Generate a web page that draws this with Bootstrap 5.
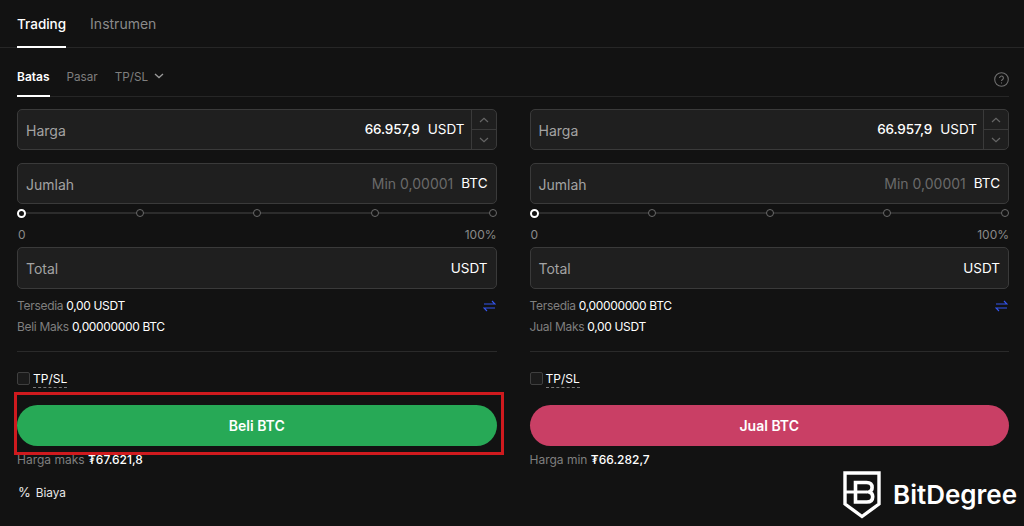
<!DOCTYPE html>
<html lang="id">
<head>
    <meta charset="UTF-8">
    <title>Trading</title>
    <link href="https://cdn.jsdelivr.net/npm/bootstrap@5.3.0/dist/css/bootstrap.min.css" rel="stylesheet">
    <style>
        html, body { height: 100%; }
        body {
            background: #121212;
            color: #fff;
            font-family: Inter, "Liberation Sans", sans-serif;
            overflow: hidden;
            position: relative;
        }
        .top-tabs {
            height: 48px;
            padding: 0 17px;
            gap: 24px;
            border-bottom: 1px solid #262626;
            font-size: 14px;
        }
        .top-tab {
            color: #8a8a8a;
            height: 48px;
            line-height: 47px;
        }
        .top-tab.on {
            color: #fff;
            font-weight: 500;
            font-size: 13.5px;
            line-height: 48px;
            border-bottom: 2px solid #fff;
        }
        .sub-tabs {
            margin: 0 15px 0 17px;
            height: 49px;
            gap: 17px;
            border-bottom: 1px solid #262626;
            font-size: 11.7px;
        }
        .sub-tab {
            color: #7f7f7f;
            height: 49px;
            line-height: 58px;
        }
        .sub-tab.on {
            color: #fff;
            font-weight: 600;
            font-size: 12px;
            line-height: 57px;
            border-bottom: 2px solid #fff;
        }
        .help-ico { margin: 24px 0 0 auto; }
        .forms {
            padding: 12px 15px 0 17px;
            gap: 33px;
        }
        .side { width: 480px; }
        .field {
            height: 41px;
            background: #1f1f1f;
            border: 1px solid #3a3a3a;
            border-radius: 5px;
            font-size: 14px;
            padding-left: 8px;
            margin-bottom: 13px;
        }
        .field-label { color: #a3a3a3; margin-top: 1px; }
        .field-val { color: #fff; font-weight: 500; font-size: 13.5px; letter-spacing: -0.1px; }
        .field-hint { color: #6a6a6a; font-size: 14px; margin-right: 8px; }
        .field-unit { color: #fff; font-size: 13.5px; margin-left: 8px; margin-right: 8px; }
        .stepper {
            width: 25px;
            height: 100%;
            border-left: 1px solid #3a3a3a;
            margin-left: -2px;
        }
        .stepper div { flex: 1; }
        .stepper div + div { border-top: 1px solid #3a3a3a; }
        .slider-row {
            height: 8px;
            margin-top: 5px;
            position: relative;
        }
        .slider-row::before {
            content: "";
            position: absolute;
            left: 4px; right: 4px; top: 3px;
            height: 2px;
            background: #2c2c2c;
        }
        .dot {
            width: 8px;
            height: 8px;
            border: 1px solid #6a6a6a;
            border-radius: 50%;
            background: #121212;
            position: relative;
        }
        .dot.on {
            width: 9px;
            height: 9px;
            border: 2px solid #fff;
            background: #121212;
        }
        .range-labels {
            font-size: 12px;
            color: #8a8a8a;
            margin: 9px 0 3px 1px;
            line-height: 18px;
        }
        .info-line {
            font-size: 12px;
            line-height: 21px;
            height: 21px;
            color: #7f7f7f;
            letter-spacing: -0.3px;
        }
        .info-line b { color: #fff; font-weight: 400; letter-spacing: -0.35px; }
        .info-wrap { margin-top: -7px; }
        .rule {
            border-top: 1px solid #2a2a2a;
            margin-top: 14px;
            margin-bottom: 18px;
        }
        .tick {
            width: 13px;
            height: 13px;
            border: 1px solid #3f3f3f;
            border-radius: 2px;
            background: #1b1b1b;
            margin: 2px 3px 0 0;
        }
        .tpsl {
            font-size: 12px;
            color: #fff;
            line-height: 15px;
            border-bottom: 1px dashed #777;
            padding-bottom: 1px;
            margin-top: 1px;
        }
        .tick-row { height: 20px; margin-bottom: 15px; }
        .trade-btn {
            width: 100%;
            height: 41px;
            border-radius: 21px;
            color: #fff;
            font-size: 14px;
            font-weight: 600;
            border: 0;
            padding: 0;
        }
        .trade-btn.buy { background: #27a956; }
        .trade-btn.sell { background: #c93f65; }
        .btn-wrap { position: relative; }
        .red-box {
            position: absolute;
            left: -3px; right: -7px; top: -13px; bottom: -9px;
            border: 3px solid #cf1a1e;
            pointer-events: none;
        }
        .limit-line {
            font-size: 12px;
            line-height: 16px;
            margin-top: 6px;
            color: #7f7f7f;
        }
        .limit-line b { color: #fff; font-weight: 500; }
        .fee-line {
            font-size: 11.8px;
            line-height: 16px;
            margin-top: 16px;
            color: #e8e8e8;
        }
        .fee-pct { margin: 0 5px 0 1px; font-size: 13px; }
        .brand {
            position: absolute;
            left: 843px;
            top: 471px;
            gap: 12px;
        }
        .brand-name {
            font-weight: 600;
            font-size: 26px;
            line-height: 1;
            color: #fff;
            margin-top: -1px;
        }
    </style>
</head>
<body>
    <div class="top-tabs d-flex">
        <div class="top-tab on">Trading</div>
        <div class="top-tab">Instrumen</div>
    </div>
    <div class="sub-tabs d-flex">
        <div class="sub-tab on">Batas</div>
        <div class="sub-tab">Pasar</div>
        <div class="sub-tab d-flex align-items-start" style="gap:6px">TP/SL
            <svg width="10" height="6" viewBox="0 0 10 6" fill="none" stroke="#9a9a9a" stroke-width="1.3" style="margin-top:25px"><path d="M1 1l4 3.6L9 1"/></svg>
        </div>
        <svg class="help-ico" width="15" height="15" viewBox="0 0 15 15" fill="none" stroke="#6f6f6f" stroke-width="1.1"><circle cx="7.5" cy="7.5" r="6.8"/><path d="M5.6 6a1.9 1.9 0 1 1 3 1.5c-.7.5-1.1.8-1.1 1.6"/><path d="M7.5 10.4v1.1"/></svg>
    </div>

    <div class="forms d-flex">
        <div class="side">
            <div class="field d-flex align-items-center">
                <span class="field-label me-auto">Harga</span>
                <span class="field-val">66.957,9</span>
                <span class="field-unit">USDT</span>
                <div class="stepper d-flex flex-column">
                    <div class="d-flex align-items-center justify-content-center"><svg width="10" height="6" viewBox="0 0 10 6" fill="none" stroke="#666" stroke-width="1.2"><path d="M1 5l4-3.6L9 5"/></svg></div>
                    <div class="d-flex align-items-center justify-content-center"><svg width="10" height="6" viewBox="0 0 10 6" fill="none" stroke="#666" stroke-width="1.2"><path d="M1 1l4 3.6L9 1"/></svg></div>
                </div>
            </div>
            <div class="field d-flex align-items-center mb-0">
                <span class="field-label me-auto">Jumlah</span>
                <span class="field-hint">Min 0,00001</span>
                <span class="field-unit ms-0">BTC</span>
            </div>
            <div class="slider-row d-flex justify-content-between align-items-center">
                <div class="dot on"></div><div class="dot"></div><div class="dot"></div><div class="dot"></div><div class="dot"></div>
            </div>
            <div class="range-labels d-flex justify-content-between"><span>0</span><span>100%</span></div>
            <div class="field d-flex align-items-center" style="height:42px">
                <span class="field-label me-auto">Total</span>
                <span class="field-unit">USDT</span>
            </div>
            <div class="info-wrap d-flex justify-content-between">
                <div>
                    <div class="info-line">Tersedia <b>0,00 USDT</b></div>
                    <div class="info-line">Beli Maks <b>0,00000000 BTC</b></div>
                </div>
                <svg width="13" height="12" viewBox="0 0 13 12" fill="none" stroke="#3355ee" stroke-width="1.2" style="margin:5px 1px 0 0"><path d="M1 4h11L9 1"/><path d="M12 8H1l3 3"/></svg>
            </div>
            <div class="rule"></div>
            <div class="tick-row d-flex align-items-start">
                <div class="tick"></div><span class="tpsl">TP/SL</span>
            </div>
            <div class="btn-wrap">
                <button class="btn trade-btn buy">Beli BTC</button>
                <div class="red-box"></div>
            </div>
            <div class="limit-line">Harga maks <b>₮67.621,8</b></div>
            <div class="fee-line"><span class="fee-pct">%</span><span>Biaya</span></div>
        </div>

        <div class="side">
            <div class="field d-flex align-items-center">
                <span class="field-label me-auto">Harga</span>
                <span class="field-val">66.957,9</span>
                <span class="field-unit">USDT</span>
                <div class="stepper d-flex flex-column">
                    <div class="d-flex align-items-center justify-content-center"><svg width="10" height="6" viewBox="0 0 10 6" fill="none" stroke="#666" stroke-width="1.2"><path d="M1 5l4-3.6L9 5"/></svg></div>
                    <div class="d-flex align-items-center justify-content-center"><svg width="10" height="6" viewBox="0 0 10 6" fill="none" stroke="#666" stroke-width="1.2"><path d="M1 1l4 3.6L9 1"/></svg></div>
                </div>
            </div>
            <div class="field d-flex align-items-center mb-0">
                <span class="field-label me-auto">Jumlah</span>
                <span class="field-hint">Min 0,00001</span>
                <span class="field-unit ms-0">BTC</span>
            </div>
            <div class="slider-row d-flex justify-content-between align-items-center">
                <div class="dot on"></div><div class="dot"></div><div class="dot"></div><div class="dot"></div><div class="dot"></div>
            </div>
            <div class="range-labels d-flex justify-content-between"><span>0</span><span>100%</span></div>
            <div class="field d-flex align-items-center" style="height:42px">
                <span class="field-label me-auto">Total</span>
                <span class="field-unit">USDT</span>
            </div>
            <div class="info-wrap d-flex justify-content-between">
                <div>
                    <div class="info-line">Tersedia <b>0,00000000 BTC</b></div>
                    <div class="info-line">Jual Maks <b>0,00 USDT</b></div>
                </div>
                <svg width="13" height="12" viewBox="0 0 13 12" fill="none" stroke="#3355ee" stroke-width="1.2" style="margin:5px 1px 0 0"><path d="M1 4h11L9 1"/><path d="M12 8H1l3 3"/></svg>
            </div>
            <div class="rule"></div>
            <div class="tick-row d-flex align-items-start">
                <div class="tick"></div><span class="tpsl">TP/SL</span>
            </div>
            <div class="btn-wrap">
                <button class="btn trade-btn sell">Jual BTC</button>
            </div>
            <div class="limit-line">Harga min <b>₮66.282,7</b></div>
        </div>
    </div>

    <div class="brand d-flex align-items-center">
        <svg width="38" height="48" viewBox="0 0 38 48" fill="none" stroke="#fff">
            <path d="M2 2h34v31L19 45.5 2 33z" stroke-width="3.4"/>
            <path d="M2 21h6" stroke-width="3"/>
            <path d="M12.5 11.5h11c3.6 0 5.6 2 5.6 5 0 2.4-1.2 3.8-3 4.4 2.2.6 3.6 2.2 3.6 4.8 0 3.4-2.3 5.3-6 5.3H12.5z" stroke-width="3.6"/>
            <path d="M8 21h16" stroke-width="3"/>
        </svg>
        <span class="brand-name">BitDegree</span>
    </div>
    <script src="https://cdn.jsdelivr.net/npm/bootstrap@5.3.0/dist/js/bootstrap.bundle.min.js"></script>
</body>
</html>
